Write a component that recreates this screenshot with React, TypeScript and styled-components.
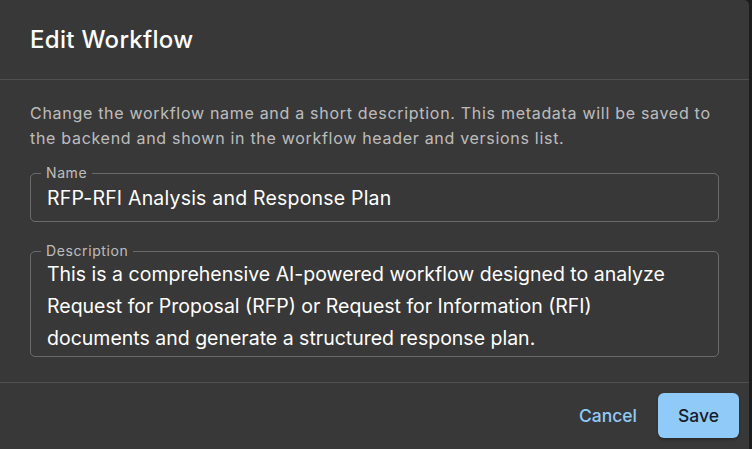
import React from "react"
import styled, { createGlobalStyle } from "styled-components"

const GlobalStyle = createGlobalStyle`
  html, body {
    margin: 0;
    padding: 0;
    background: #1c1c1c;
    font-family: Inter, "Noto Sans", "Liberation Sans", sans-serif;
    overflow: hidden;
  }
`

const Page = styled.div`
  width: 752px;
  height: 449px;
  display: flex;
`

const Dialog = styled.div`
  width: 749px;
  height: 449px;
  background: #383838;
  border-top-right-radius: 5px;
  display: flex;
  flex-direction: column;
  color: #fff;
`

const Header = styled.div`
  height: 79px;
  padding: 0 30px;
  display: flex;
  align-items: center;
  border-bottom: 1px solid rgba(255, 255, 255, 0.12);
`

const Title = styled.h2`
  margin: 0;
  font-size: 24px;
  font-weight: 500;
  letter-spacing: 0.3px;
  color: #fff;
`

const Content = styled.div`
  padding: 21px 30px 25px;
  display: flex;
  flex-direction: column;
  border-bottom: 1px solid rgba(255, 255, 255, 0.12);
`

const Hint = styled.p`
  margin: 0 0 15px;
  font-size: 16px;
  line-height: 25px;
  letter-spacing: 0.7px;
  color: rgba(255, 255, 255, 0.68);
`

const Field = styled.fieldset<{ $gap?: number }>`
  margin: ${(p) => p.$gap ?? 0}px 0 0;
  padding: 0 16px;
  border: 1px solid rgba(255, 255, 255, 0.25);
  border-radius: 5px;
  min-width: 0;
`

const Legend = styled.legend`
  margin-left: -6px;
  padding: 0 5px;
  font-size: 14px;
  line-height: 14px;
  letter-spacing: 0.6px;
  color: rgba(255, 255, 255, 0.68);
`

const TextInput = styled.input`
  display: block;
  width: 100%;
  box-sizing: border-box;
  height: 41px;
  margin: 0;
  padding: 0 0 6px;
  border: none;
  outline: none;
  background: transparent;
  color: #fff;
  font-family: inherit;
  font-size: 19.5px;
  letter-spacing: 0.2px;
`

const TextArea = styled.textarea`
  display: block;
  width: 100%;
  box-sizing: border-box;
  height: 98px;
  margin: 0;
  padding: 0 8px 2px 0;
  border: none;
  outline: none;
  resize: none;
  overflow: hidden;
  background: transparent;
  color: #fff;
  font-family: inherit;
  font-size: 19.5px;
  line-height: 32px;
`

const Actions = styled.div`
  flex: 1;
  padding: 10px 10px 0;
  display: flex;
  justify-content: flex-end;
  align-items: flex-start;
  gap: 8px;
`

const Button = styled.button<{ $primary?: boolean }>`
  height: 45px;
  padding: 0 ${(p) => (p.$primary ? 20 : 13)}px;
  border: none;
  border-radius: 6px;
  font-family: inherit;
  font-size: 17.5px;
  font-weight: 500;
  cursor: pointer;
  background: ${(p) => (p.$primary ? "#90caf9" : "transparent")};
  color: ${(p) => (p.$primary ? "rgba(0, 0, 0, 0.87)" : "#90caf9")};
  box-shadow: ${(p) =>
    p.$primary ? "0 2px 3px rgba(0,0,0,0.25)" : "none"};
`

const App = () => {
  return (
    <Page>
      <GlobalStyle />
      <Dialog>
        <Header>
          <Title>Edit Workflow</Title>
        </Header>
        <Content>
          <Hint>
            Change the workflow name and a short description. This metadata will be saved to
            the backend and shown in the workflow header and versions list.
          </Hint>
          <Field>
            <Legend>Name</Legend>
            <TextInput defaultValue="RFP-RFI Analysis and Response Plan" />
          </Field>
          <Field $gap={22}>
            <Legend>Description</Legend>
            <TextArea
              defaultValue="This is a comprehensive AI-powered workflow designed to analyze Request for Proposal (RFP) or Request for Information (RFI) documents and generate a structured response plan."
            />
          </Field>
        </Content>
        <Actions>
          <Button>Cancel</Button>
          <Button $primary>Save</Button>
        </Actions>
      </Dialog>
    </Page>
  )
}

export default React.memo(App)
